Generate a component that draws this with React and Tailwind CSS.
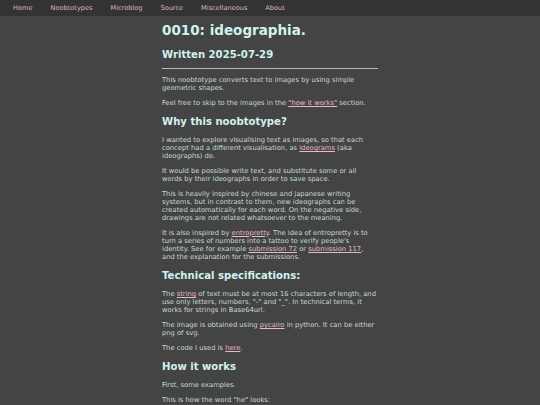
import React from 'react';

const nav = ['Home', 'Noobtotypes', 'Microblog', 'Source', 'Miscellaneous', 'About'];

function A({ children }) {
  return <a href="#" className="text-[#e6b8d2] underline">{children}</a>;
}

function H2({ children }) {
  return <h2 className="text-[10.1px] font-bold text-[#d2f2ee] mt-[9.5px] mb-[8px] leading-[1.2]">{children}</h2>;
}

function P({ children }) {
  return <p className="my-[6.75px]">{children}</p>;
}

export default function App() {
  return (
    <div className="min-h-[405px] bg-[#444444] font-['DejaVu_Sans',sans-serif] text-[6.75px] leading-[8px] text-[#c3dbd3]">
      {/* Top nav */}
      <nav className="h-[16px] bg-[#333333] flex items-center pl-[4px]">
        {nav.map(item => (
          <a key={item} href="#" className="px-[9px] text-[#d6b6c6] text-[6.6px]">{item}</a>
        ))}
      </nav>

      <main className="w-[216px] mx-auto pt-[6px] pb-[10px]">
        <h1 className="text-[13.5px] font-bold text-[#d2f2ee] leading-[1.2] mb-[11px]">0010: ideographia.</h1>
        <h2 className="text-[10.1px] font-bold text-[#d2f2ee] leading-[1.2] mb-[7px]">Written 2025-07-29</h2>
        <hr className="border-0 border-t border-[#b8b8b8] mb-[5px]" />

        <P>This noobtotype converts text to images by using simple geometric shapes.</P>
        <P>Feel free to skip to the images in the <A>"how it works"</A> section.</P>

        <H2>Why this noobtotype?</H2>
        <P>I wanted to explore visualising text as images, so that each concept had a different visualisation, as <A>ideograms</A> (aka ideographs) do.</P>
        <P>It would be possible write text, and substitute some or all words by their ideographs in order to save space.</P>
        <P>This is heavily inspired by chinese and japanese writing systems, but in contrast to them, new ideographs can be created automatically for each word. On the negative side, drawings are not related whatsoever to the meaning.</P>
        <P>It is also inspired by <A>entropretty</A>. The idea of entropretty is to turn a series of numbers into a tattoo to verify people's identity. See for example <A>submission 72</A> or <A>submission 117</A>, and the explanation for the submissions.</P>

        <H2>Technical specifications:</H2>
        <P>The <A>string</A> of text must be at most 16 characters of length, and use only letters, numbers, "-" and "_". In technical terms, it works for strings in Base64url.</P>
        <P>The image is obtained using <A>pycairo</A> in python. It can be either png of svg.</P>
        <P>The code I used is <A>here</A>.</P>

        <H2>How it works</H2>
        <P>First, some examples.</P>
        <P>This is how the word "he" looks:</P>
      </main>
    </div>
  );
}
